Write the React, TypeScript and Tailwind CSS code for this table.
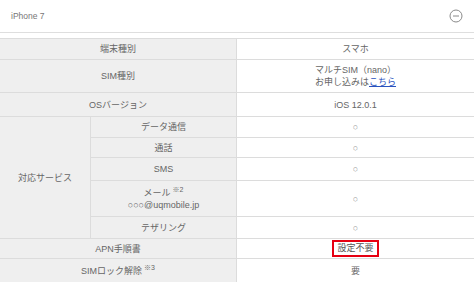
import { Fragment } from "react";

const font = {
  fontFamily: '"Liberation Sans", "Noto Sans CJK JP", sans-serif',
};

function MinusCircle() {
  return (
    <svg width="14" height="14" viewBox="0 0 14 14" aria-hidden="true">
      <circle cx="7" cy="7" r="6" fill="none" stroke="#8a8a8a" strokeWidth="1" />
      <line x1="4" y1="7" x2="10" y2="7" stroke="#8a8a8a" strokeWidth="1" />
    </svg>
  );
}

function Sup({ n }: { n: string }) {
  return <sup className="relative -top-[4px] ml-[2px] text-[7px]">※{n}</sup>;
}

export default function App() {
  const label = "flex items-center justify-center bg-[#efefef] text-center";
  const value = "flex items-center justify-center bg-white text-center";

  return (
    <div className="h-[282px] w-[474px] overflow-hidden bg-white text-[9px] leading-[12px] text-[#666]" style={font}>
      <div className="flex h-[33px] items-center justify-between border-b border-[#dedede] pl-[11px] pr-[11px]">
        <span className="text-[8.5px] text-[#777]">iPhone 7</span>
        <MinusCircle />
      </div>

      <div className="mt-[5px] grid grid-cols-[90px_145px_1fr] grid-rows-[20px_32px_23px_20px_19px_22px_35px_21px_19px_24px] gap-px bg-[#dcdcdc] py-px">
        <div className={`${label} col-span-2`}>端末種別</div>
        <div className={value}>スマホ</div>

        <div className={`${label} col-span-2`}>SIM種別</div>
        <div className={`${value} flex-col`}>
          <span>マルチSIM（nano）</span>
          <span>
            お申し込みは<span className="text-[#2a52be] underline">こちら</span>
          </span>
        </div>

        <div className={`${label} col-span-2`}>OSバージョン</div>
        <div className={value}>iOS 12.0.1</div>

        <div className={`${label} row-span-5`}>対応サービス</div>
        {[
          { key: "data", node: <>データ通信</> },
          { key: "call", node: <>通話</> },
          { key: "sms", node: <>SMS</> },
          {
            key: "mail",
            node: (
              <span className="flex flex-col items-center">
                <span>
                  メール
                  <Sup n="2" />
                </span>
                <span>○○○@uqmobile.jp</span>
              </span>
            ),
          },
          { key: "tether", node: <>テザリング</> },
        ].map((row) => (
          <Fragment key={row.key}>
            <div className={label}>{row.node}</div>
            <div className={`${value} text-[#999]`}>○</div>
          </Fragment>
        ))}

        <div className={`${label} col-span-2`}>APN手順書</div>
        <div className={value}>
          <span className="border-2 border-[#e60012] px-[3px] py-[1px] leading-[11px] text-[#555]">設定不要</span>
        </div>

        <div className={`${label} col-span-2`}>
          <span>
            SIMロック解除
            <Sup n="3" />
          </span>
        </div>
        <div className={value}>要</div>
      </div>
    </div>
  );
}
